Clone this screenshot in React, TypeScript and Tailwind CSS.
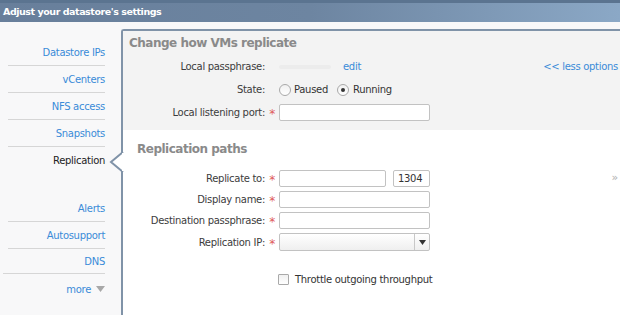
import { ReactNode } from "react";

const navTop = ["Datastore IPs", "vCenters", "NFS access", "Snapshots"];
const navBottom = ["Alerts", "Autosupport"];

function NavItem({ label }: { label: string }) {
  return (
    <div className="h-[27px] ml-[8px] mr-[16px] border-b border-[#d6d6d6] flex items-center justify-end text-[#3a8bd8]">
      {label}
    </div>
  );
}

function Row({
  label,
  required,
  h = "h-[23px]",
  children,
}: {
  label: string;
  required?: boolean;
  h?: string;
  children?: ReactNode;
}) {
  return (
    <div className={`${h} flex items-center`}>
      <div className="w-[142px] text-right text-[#3c3c3c] whitespace-nowrap">{label}</div>
      <div className="w-[14px] text-center text-[#de5a5a] text-[12px] leading-none pt-[3px]">
        {required ? "*" : ""}
      </div>
      {children}
    </div>
  );
}

function Input({ w, value }: { w: string; value?: string }) {
  return (
    <div className={`${w} h-[17px] bg-white border border-[#c2c2c2] rounded-[2px] flex items-center px-[4px] text-[#333]`}>
      {value}
    </div>
  );
}

function Radio({ checked }: { checked?: boolean }) {
  return (
    <span className="w-[12px] h-[12px] rounded-full border border-[#a9a9a9] bg-gradient-to-b from-[#f0f0f0] to-white flex items-center justify-center">
      {checked && <span className="w-[4px] h-[4px] rounded-full bg-[#333]" />}
    </span>
  );
}

export default function App() {
  return (
    <div className="w-[620px] h-[315px] overflow-hidden bg-[#f8f8f9] text-[10px] tracking-[-0.3px] font-['DejaVu_Sans',sans-serif] flex flex-col">
      {/* Title bar */}
      <div className="h-[22px] shrink-0 bg-gradient-to-r from-[#687f9b] via-[#6d85a1] to-[#8ba8c6] border-t-[3px] border-[#5b7490] flex items-center pl-[3px] text-white text-[9.5px] font-bold tracking-[-0.45px]">
        Adjust your datastore's settings
      </div>

      <div className="flex flex-1 pt-[7px]">
        {/* Left nav */}
        <div className="w-[121px] shrink-0 pt-[10px]">
          {navTop.map((n) => (
            <NavItem key={n} label={n} />
          ))}
          <div className="h-[27px] mr-[16px] flex items-center justify-end text-[#222]">Replication</div>
          <div className="h-[21px]" />
          {navBottom.map((n) => (
            <NavItem key={n} label={n} />
          ))}
          <div className="h-[25px] ml-[3px] mr-[16px] border-b border-[#d6d6d6] flex items-center justify-end text-[#3a8bd8]">
            DNS
          </div>
          <div className="h-[30px] mr-[16px] flex items-center justify-end gap-[5px] text-[#3a8bd8]">
            more
            <svg width="9" height="6" viewBox="0 0 9 6">
              <path d="M0 0 H9 L4.5 6 Z" fill="#a8a8a8" />
            </svg>
          </div>
        </div>

        {/* Panel */}
        <div className="relative flex-1 border-l-2 border-t-2 border-[#8093a8] rounded-tl-[3px] bg-white">
          {/* selection notch */}
          <svg className="absolute left-[-14px] top-[121px]" width="16" height="20" viewBox="0 0 16 20">
            <path d="M14 0 L2 10 L14 20" fill="white" stroke="#8093a8" strokeWidth="2" />
            <rect x="13" y="1" width="3" height="18" fill="white" />
          </svg>

          <div className="h-[99px] bg-[#f3f3f3] pt-[4px]">
            <div className="h-[16px] flex items-center pl-[6px] text-[12px] font-bold text-[#8a8a8a] tracking-[-0.5px]">
              Change how VMs replicate
            </div>
            <div className="mt-[4px]">
              <Row label="Local passphrase:">
                <div className="w-[52px] h-[4px] rounded-full bg-[#ececec]" />
                <span className="ml-[12px] text-[#3a8bd8]">edit</span>
                <span className="ml-auto mr-[2px] text-[#3a8bd8]">&lt;&lt; less options</span>
              </Row>
              <Row label="State:">
                <Radio />
                <span className="ml-[3px] text-[#333]">Paused</span>
                <span className="ml-[9px]">
                  <Radio checked />
                </span>
                <span className="ml-[4px] text-[#333]">Running</span>
              </Row>
              <Row label="Local listening port:" required>
                <Input w="w-[151px]" />
              </Row>
            </div>
          </div>

          <div className="pt-[11px]">
            <div className="h-[16px] flex items-center pl-[14px] text-[12px] font-bold text-[#8a8a8a] tracking-[-0.5px]">
              Replication paths
            </div>
            <div className="mt-[11px]">
              <Row label="Replicate to:" required h="h-[21px]">
                <Input w="w-[107px]" />
                <div className="ml-[7px]">
                  <Input w="w-[37px]" value="1304" />
                </div>
                <span className="ml-auto mr-[2px] text-[#b0b0b0] text-[11px]">»</span>
              </Row>
              <Row label="Display name:" required h="h-[21px]">
                <Input w="w-[151px]" />
              </Row>
              <Row label="Destination passphrase:" required h="h-[21px]">
                <Input w="w-[151px]" />
              </Row>
              <Row label="Replication IP:" required h="h-[22px]">
                <div className="w-[151px] h-[18px] border border-[#c2c2c2] rounded-[2px] bg-gradient-to-b from-white to-[#efefef] flex">
                  <div className="flex-1" />
                  <div className="w-[15px] border-l border-[#c8c8c8] flex items-center justify-center">
                    <svg width="7" height="5" viewBox="0 0 7 5">
                      <path d="M0 0 H7 L3.5 5 Z" fill="#333" />
                    </svg>
                  </div>
                </div>
              </Row>
            </div>
            <div className="mt-[16px] h-[20px] flex items-center pl-[155px]">
              <span className="w-[11px] h-[11px] border border-[#a9a9a9] rounded-[1px] bg-gradient-to-b from-[#f0f0f0] to-white" />
              <span className="ml-[6px] text-[#333]">Throttle outgoing throughput</span>
            </div>
          </div>
        </div>
      </div>
    </div>
  );
}
